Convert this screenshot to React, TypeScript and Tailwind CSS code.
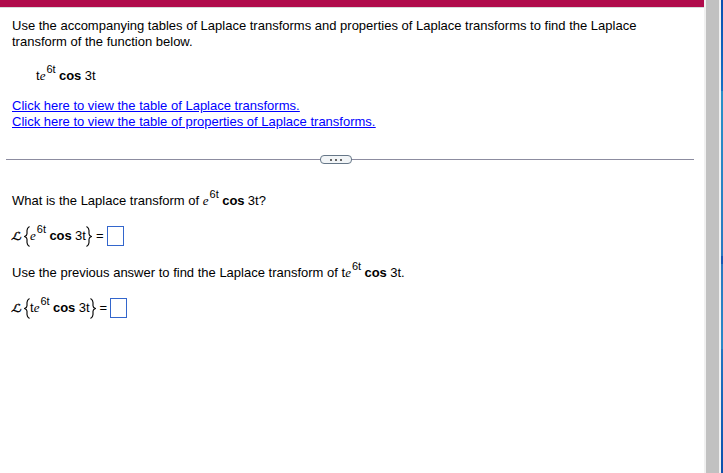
import type { ReactNode } from 'react'

function Sup({ children }: { children: ReactNode }) {
  return <span className="relative -top-[7px] ml-px text-[11px] leading-none">{children}</span>
}

function E() {
  return <i className="font-['Liberation_Serif',serif] text-[13px] leading-none">e</i>
}

function Expression({ t }: { t?: boolean }) {
  return (
    <span className="whitespace-pre">
      {t && 't'}
      <E />
      <Sup>6t</Sup>
      <b className="tracking-[-0.1px]"> cos </b>3t
    </span>
  )
}

function Brace({ flip }: { flip?: boolean }) {
  return (
    <svg
      className={flip ? 'h-[21px] w-[6px] shrink-0 -scale-x-100' : 'h-[21px] w-[6px] shrink-0'}
      viewBox="0 0 6 21"
      fill="none"
      stroke="#111"
      strokeWidth="1.2"
    >
      <path d="M5.5 .5C3.8 1.5 3 2.7 3 4.5v3.2C3 9 2 10 .5 10.5 2 11 3 12 3 13.3v3.2c0 1.8.8 3 2.5 4" />
    </svg>
  )
}

function Answer({ t }: { t?: boolean }) {
  return (
    <div className="flex h-[22px] items-center">
      <span className="w-[12px] origin-left scale-x-[1.25] -skew-x-12 font-['DejaVu_Sans',sans-serif] text-[11px] leading-none [-webkit-text-stroke:0.35px_#000]">
        ℒ
      </span>
      <Brace />
      <Expression t={t} />
      <Brace flip />
      <span className="ml-[4px]">=</span>
      <span className="ml-[3px] h-[20px] w-[17px] border border-[#3366cc]" />
    </div>
  )
}

export default function App() {
  return (
    <div className="flex h-[473px] w-[723px] overflow-hidden bg-white font-['Liberation_Sans',sans-serif] text-[13px] leading-[16px] text-black">
      <main className="w-[704px]">
        <div className="h-[8px] border-b border-[#d9d9d9] bg-[#b00b4b]" />
        <div className="pt-[10px] pl-[12px]">
          <p className="whitespace-nowrap">
            Use the accompanying tables of Laplace transforms and properties of Laplace transforms to find the Laplace
            <br />
            transform of the function below.
          </p>
          <div className="mt-[18px] h-[16px] pl-[24px]">
            <Expression t />
          </div>
          <div className="mt-[14px] flex flex-col items-start text-[#0000ff] underline">
            <a href="#transforms">Click here to view the table of Laplace transforms.</a>
            <a href="#properties">Click here to view the table of properties of Laplace transforms.</a>
          </div>
        </div>

        <div className="mt-[24px] ml-[6px] flex h-[11px] w-[688px] items-center">
          <div className="h-px w-[314px] bg-[#8c8ca0]" />
          <button className="flex h-[9px] w-[32px] items-center justify-center gap-[3px] rounded-[4px] border border-[#667788] bg-[#f2f5f7]">
            <span className="size-[2px] bg-[#666]" />
            <span className="size-[2px] bg-[#666]" />
            <span className="size-[2px] bg-[#666]" />
          </button>
          <div className="h-px flex-1 bg-[#8c8ca0]" />
        </div>

        <div className="pt-[28px] pl-[12px]">
          <p className="h-[16px] whitespace-nowrap">
            What is the Laplace transform of <Expression />?
          </p>
          <div className="mt-[16px]">
            <Answer />
          </div>
          <p className="mt-[18px] h-[16px] whitespace-nowrap">
            Use the previous answer to find the Laplace transform of <Expression t />.
          </p>
          <div className="mt-[16px]">
            <Answer t />
          </div>
        </div>
      </main>
      <div className="w-[17px] border-x-2 border-[#f0f0f0] bg-[#c1c1c1]" />
      {/* Desktop showing past the window edge */}
      <div className="flex w-[2px] flex-col">
        <div className="h-[91px] bg-linear-to-b from-[#0a4fb0] to-[#1670c4]" />
        <div className="h-[165px] bg-linear-to-b from-[#2a90c8] to-[#2a78c0]" />
        <div className="h-[8px] bg-[#1458b4]" />
        <div className="h-[85px] bg-linear-to-b from-[#2a78c0] to-[#2a88c8]" />
        <div className="flex-1 bg-linear-to-b from-[#2274c0] to-[#0c50ac]" />
      </div>
    </div>
  )
}
